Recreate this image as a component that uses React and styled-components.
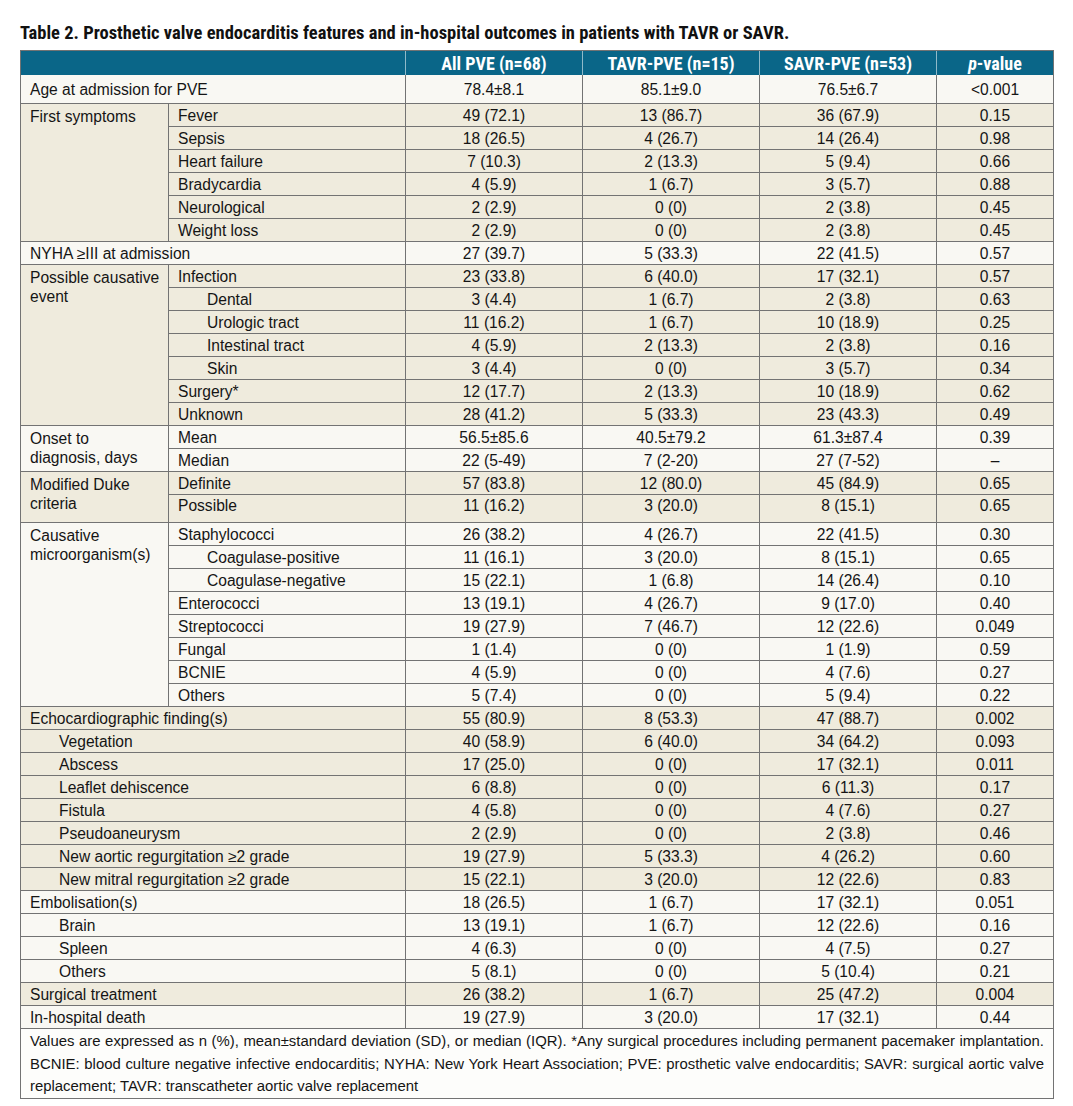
import React from "react";
import styled, { createGlobalStyle } from "styled-components";

const GlobalStyle = createGlobalStyle`
  body {
    margin: 0;
    background: #ffffff;
    font-family: "Liberation Sans", Arial, sans-serif;
    color: #151515;
  }
`;

const LINE = "#737373";
const LIGHT = "#f9f8f3";
const BEIGE = "#efebdd";
const CONDENSED = `"Liberation Sans Narrow", "Roboto Condensed", "DejaVu Sans Condensed", sans-serif`;

const Page = styled.div`
  padding: 0 0 0 20px;
  width: 1034px;
`;

const Title = styled.h1`
  margin: 0;
  padding: 22px 0 6px;
  font-family: ${CONDENSED};
  font-weight: bold;
  font-size: 18.5px;
  line-height: 22px;
  color: #111;
`;

const Table = styled.div`
  width: 1034px;
  box-sizing: border-box;
  border: 1px solid ${LINE};
  font-size: 15.6px;
`;

const HeadRow = styled.div`
  display: grid;
  grid-template-columns: 384px 177px 177px 177px 1fr;
  height: 24px;
  background: #0a6688;
  color: #fff;
  font-family: ${CONDENSED};
  font-weight: bold;
  font-size: 18px;
`;

const HeadCell = styled.div`
  display: flex;
  align-items: center;
  justify-content: center;
  border-left: ${(p) => (p.$first ? "none" : "1px solid rgba(255,255,255,0.55)")};
`;

const Row = styled.div`
  display: grid;
  grid-template-columns: ${(p) => (p.$sub ? "236px" : "384px")} 177px 177px 177px 1fr;
  box-sizing: border-box;
  height: ${(p) => p.$h || 23}px;
  border-top: ${(p) => (p.$noTop ? "none" : `1px solid ${LINE}`)};
  background: ${(p) => p.$bg || "transparent"};
`;

const Label = styled.div`
  display: flex;
  align-items: ${(p) => (p.$top ? "flex-start" : "center")};
  padding-top: ${(p) => (p.$top ? "2px" : "2px")};
  padding-left: ${(p) => (p.$indent ? 38 : 9)}px;
  white-space: nowrap;
`;

const Value = styled.div`
  display: flex;
  align-items: ${(p) => (p.$top ? "flex-start" : "center")};
  padding-top: 2px;
  justify-content: center;
  border-left: 1px solid ${LINE};
`;

const Group = styled.div`
  display: flex;
  border-top: 1px solid ${LINE};
  background: ${(p) => p.$bg};
`;

const GroupLabel = styled.div`
  width: 148px;
  box-sizing: border-box;
  border-right: 1px solid ${LINE};
  padding: 3px 0 0 9px;
  line-height: 19px;
`;

const SubRows = styled.div`
  flex: 1;
  display: flex;
  flex-direction: column;
`;

const Foot = styled.div`
  border-top: 1px solid ${LINE};
  background: #fdfdfb;
  padding: 1px 9px 0 9px;
  font-size: 14.9px;
  line-height: 22.7px;
`;

const FootLine = styled.div`
  text-align: ${(p) => (p.$justify ? "justify" : "left")};
  text-align-last: ${(p) => (p.$justify ? "justify" : "left")};
  white-space: ${(p) => (p.$justify ? "normal" : "nowrap")};
`;

const Italic = styled.i`
  font-weight: bold;
`;

const Values = ({ vals, top }) =>
  vals.map((v, i) => (
    <Value key={i} $top={top}>
      {v}
    </Value>
  ));

const groups = [
  { label: "Age at admission for PVE", vals: ["78.4±8.1", "85.1±9.0", "76.5±6.7", "<0.001"], bg: LIGHT, h: 28 },
  {
    label: ["First symptoms"],
    bg: BEIGE,
    rows: [
      ["Fever", "49 (72.1)", "13 (86.7)", "36 (67.9)", "0.15"],
      ["Sepsis", "18 (26.5)", "4 (26.7)", "14 (26.4)", "0.98"],
      ["Heart failure", "7 (10.3)", "2 (13.3)", "5 (9.4)", "0.66"],
      ["Bradycardia", "4 (5.9)", "1 (6.7)", "3 (5.7)", "0.88"],
      ["Neurological", "2 (2.9)", "0 (0)", "2 (3.8)", "0.45"],
      ["Weight loss", "2 (2.9)", "0 (0)", "2 (3.8)", "0.45"],
    ],
  },
  { label: "NYHA ≥III at admission", vals: ["27 (39.7)", "5 (33.3)", "22 (41.5)", "0.57"], bg: LIGHT },
  {
    label: ["Possible causative", "event"],
    bg: BEIGE,
    rows: [
      ["Infection", "23 (33.8)", "6 (40.0)", "17 (32.1)", "0.57"],
      ["Dental", "3 (4.4)", "1 (6.7)", "2 (3.8)", "0.63", true],
      ["Urologic tract", "11 (16.2)", "1 (6.7)", "10 (18.9)", "0.25", true],
      ["Intestinal tract", "4 (5.9)", "2 (13.3)", "2 (3.8)", "0.16", true],
      ["Skin", "3 (4.4)", "0 (0)", "3 (5.7)", "0.34", true],
      ["Surgery*", "12 (17.7)", "2 (13.3)", "10 (18.9)", "0.62"],
      ["Unknown", "28 (41.2)", "5 (33.3)", "23 (43.3)", "0.49"],
    ],
  },
  {
    label: ["Onset to", "diagnosis, days"],
    bg: LIGHT,
    rows: [
      ["Mean", "56.5±85.6", "40.5±79.2", "61.3±87.4", "0.39"],
      ["Median", "22 (5-49)", "7 (2-20)", "27 (7-52)", "–"],
    ],
  },
  {
    label: ["Modified Duke", "criteria"],
    bg: BEIGE,
    lastH: 28,
    rows: [
      ["Definite", "57 (83.8)", "12 (80.0)", "45 (84.9)", "0.65"],
      ["Possible", "11 (16.2)", "3 (20.0)", "8 (15.1)", "0.65"],
    ],
  },
  {
    label: ["Causative", "microorganism(s)"],
    bg: LIGHT,
    rows: [
      ["Staphylococci", "26 (38.2)", "4 (26.7)", "22 (41.5)", "0.30"],
      ["Coagulase-positive", "11 (16.1)", "3 (20.0)", "8 (15.1)", "0.65", true],
      ["Coagulase-negative", "15 (22.1)", "1 (6.8)", "14 (26.4)", "0.10", true],
      ["Enterococci", "13 (19.1)", "4 (26.7)", "9 (17.0)", "0.40"],
      ["Streptococci", "19 (27.9)", "7 (46.7)", "12 (22.6)", "0.049"],
      ["Fungal", "1 (1.4)", "0 (0)", "1 (1.9)", "0.59"],
      ["BCNIE", "4 (5.9)", "0 (0)", "4 (7.6)", "0.27"],
      ["Others", "5 (7.4)", "0 (0)", "5 (9.4)", "0.22"],
    ],
  },
  { label: "Echocardiographic finding(s)", vals: ["55 (80.9)", "8 (53.3)", "47 (88.7)", "0.002"], bg: BEIGE },
  { label: "Vegetation", vals: ["40 (58.9)", "6 (40.0)", "34 (64.2)", "0.093"], bg: BEIGE, indent: true },
  { label: "Abscess", vals: ["17 (25.0)", "0 (0)", "17 (32.1)", "0.011"], bg: BEIGE, indent: true },
  { label: "Leaflet dehiscence", vals: ["6 (8.8)", "0 (0)", "6 (11.3)", "0.17"], bg: BEIGE, indent: true },
  { label: "Fistula", vals: ["4 (5.8)", "0 (0)", "4 (7.6)", "0.27"], bg: BEIGE, indent: true },
  { label: "Pseudoaneurysm", vals: ["2 (2.9)", "0 (0)", "2 (3.8)", "0.46"], bg: BEIGE, indent: true },
  { label: "New aortic regurgitation ≥2 grade", vals: ["19 (27.9)", "5 (33.3)", "4 (26.2)", "0.60"], bg: BEIGE, indent: true },
  { label: "New mitral regurgitation ≥2 grade", vals: ["15 (22.1)", "3 (20.0)", "12 (22.6)", "0.83"], bg: BEIGE, indent: true },
  { label: "Embolisation(s)", vals: ["18 (26.5)", "1 (6.7)", "17 (32.1)", "0.051"], bg: LIGHT },
  { label: "Brain", vals: ["13 (19.1)", "1 (6.7)", "12 (22.6)", "0.16"], bg: LIGHT, indent: true },
  { label: "Spleen", vals: ["4 (6.3)", "0 (0)", "4 (7.5)", "0.27"], bg: LIGHT, indent: true },
  { label: "Others", vals: ["5 (8.1)", "0 (0)", "5 (10.4)", "0.21"], bg: LIGHT, indent: true },
  { label: "Surgical treatment", vals: ["26 (38.2)", "1 (6.7)", "25 (47.2)", "0.004"], bg: BEIGE },
  { label: "In-hospital death", vals: ["19 (27.9)", "3 (20.0)", "17 (32.1)", "0.44"], bg: LIGHT },
];

const SplitGroup = ({ g }) => (
  <Group $bg={g.bg}>
    <GroupLabel>
      {g.label.map((l, i) => (
        <div key={i}>{l}</div>
      ))}
    </GroupLabel>
    <SubRows>
      {g.rows.map((r, i) => {
        const last = i === g.rows.length - 1;
        const tall = last && g.lastH;
        return (
          <Row key={i} $sub $noTop={i === 0} $h={tall ? g.lastH : i === 0 ? 22 : 23}>
            <Label $indent={r[5]} $top={tall}>
              {r[0]}
            </Label>
            <Values vals={r.slice(1, 5)} top={tall} />
          </Row>
        );
      })}
    </SubRows>
  </Group>
);

export default function App() {
  return (
    <Page>
      <GlobalStyle />
      <Title>Table 2. Prosthetic valve endocarditis features and in-hospital outcomes in patients with TAVR or SAVR.</Title>
      <Table>
        <HeadRow>
          <HeadCell $first />
          <HeadCell>All PVE (n=68)</HeadCell>
          <HeadCell>TAVR-PVE (n=15)</HeadCell>
          <HeadCell>SAVR-PVE (n=53)</HeadCell>
          <HeadCell>
            <Italic>p</Italic>-value
          </HeadCell>
        </HeadRow>
        {groups.map((g, i) =>
          g.rows ? (
            <SplitGroup key={i} g={g} />
          ) : (
            <Row key={i} $bg={g.bg} $h={g.h} $noTop={i === 0}>
              <Label $indent={g.indent}>{g.label}</Label>
              <Values vals={g.vals} />
            </Row>
          )
        )}
        <Foot>
          <FootLine $justify>
            Values are expressed as n (%), mean±standard deviation (SD), or median (IQR). *Any surgical procedures including permanent pacemaker implantation.
          </FootLine>
          <FootLine $justify>
            BCNIE: blood culture negative infective endocarditis; NYHA: New York Heart Association; PVE: prosthetic valve endocarditis; SAVR: surgical aortic valve
          </FootLine>
          <FootLine>replacement; TAVR: transcatheter aortic valve replacement</FootLine>
        </Foot>
      </Table>
    </Page>
  );
}
